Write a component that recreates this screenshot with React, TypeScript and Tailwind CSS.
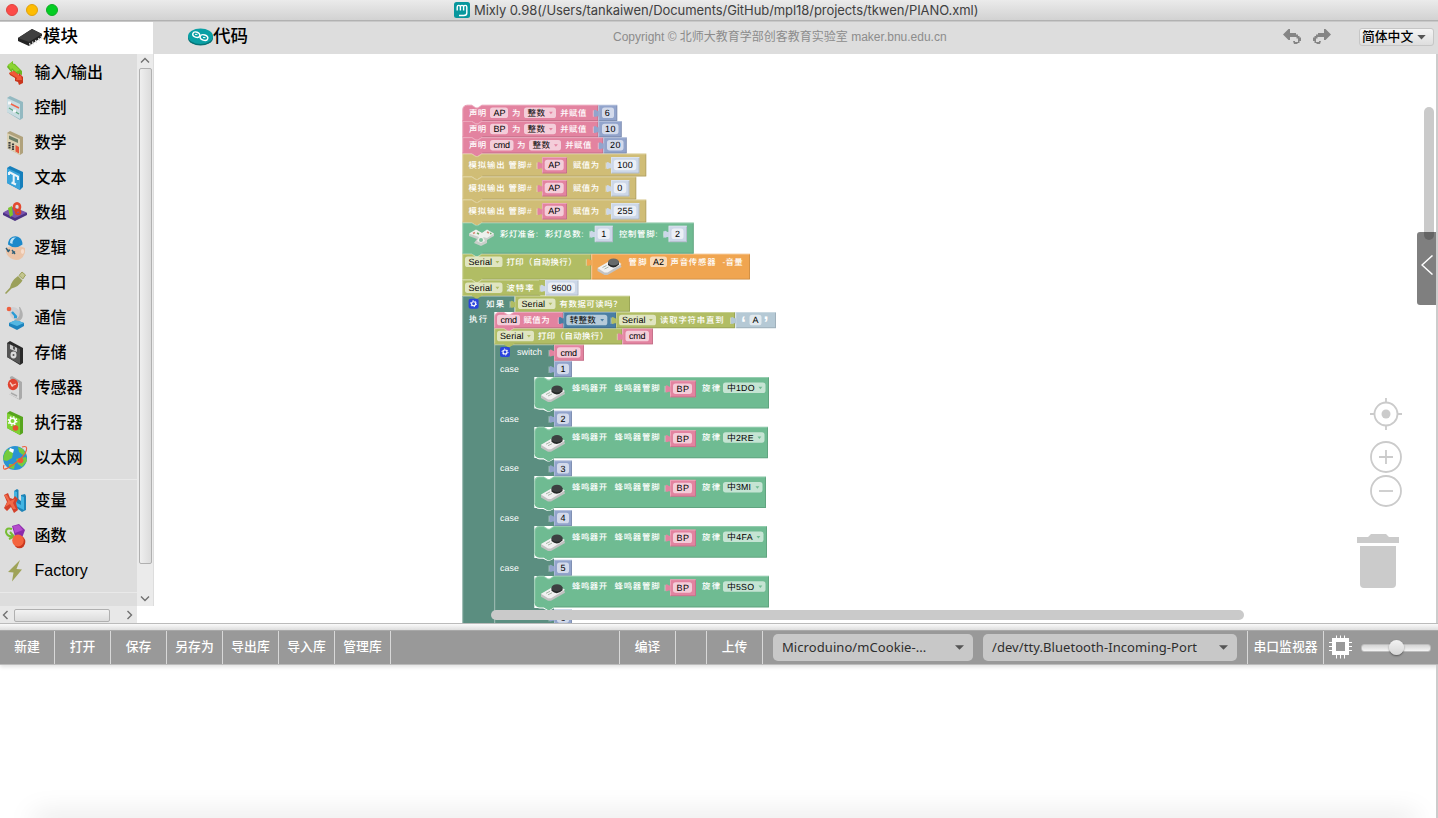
import React from "react";

const CJK = "font-['Liberation_Sans','Noto_Sans_CJK_SC',sans-serif]";

const C = {
  pink: "#e383a0",
  blue: "#92a4cc",
  sand: "#d0bd76",
  green: "#6fbb92",
  olive: "#b1bd64",
  orange: "#f0a550",
  teal: "#5b8e80",
  navy: "#4a7ea3",
  pale: "#b5c9d5",
  value: "#ccd7e8",
};

/* ---------- workspace blocks ---------- */

type BlockProps = { x: number; y: number; w: number; h: number; c: string; round?: boolean; stack?: boolean };

function Block({ x, y, w, h, c, round, stack }: BlockProps) {
  const top = round ? `M${x},${y + 5} a5,5 0 0 1 5,-5` : `M${x},${y}`;
  const d = stack
    ? `${top} H${x + 9.5} l4,2.6 h2 l4,-2.6 H${x + w} V${y + h} H${x + 19.5} l-4,2.6 h-2 l-4,-2.6 H${round && h > 20 ? x + 5 : x} ${round && h > 20 ? "a5,5 0 0 1 -5,-5" : ""} Z`
    : `${top} H${x + w} V${y + h} H${x} Z`;
  return (
    <g>
      <path d={d} fill={c} />
      <path d={`M${x + 0.5},${y + h - (round && h > 20 ? 5 : 1)} V${y + (round ? 5 : 0.5)} ${round ? "a4.5,4.5 0 0 1 4.5,-4.5" : ""} ${stack ? `H${x + 9.5} l4,2.6 h2 l4,-2.6` : ""} H${x + w - 0.5}`} fill="none" stroke="#fff" strokeOpacity=".28" />
      <path d={`M${x + w - 0.5},${y + 1} V${y + h - 0.5} H${x + (stack ? 20 : 1)}`} fill="none" stroke="#000" strokeOpacity=".12" />
    </g>
  );
}

function Tab({ x, y, c }: { x: number; y: number; c: string }) {
  return (
    <g>
      <path d={`M${x + 0.5},${y + 3} v1.5 c0,6 -5.3,-5 -5.3,4.5 c0,7 5.3,-1 5.3,4.3 z`} fill={c} />
      <path d={`M${x - 5},${y + 5.5} v6.5`} stroke="#fff" strokeOpacity=".4" fill="none" />
    </g>
  );
}

function Value(p: BlockProps) {
  return (
    <g>
      <Block {...p} />
      <Tab x={p.x} y={p.y} c={p.c} />
    </g>
  );
}

type TProps = { x: number; y: number; w?: number; s: string; f?: string; size?: number; b?: number };

function T({ x, y, w, s, f = "#fff", size = 8.4, b = 500 }: TProps) {
  return (
    <text x={x} y={y} textLength={w} fill={f} fontSize={size} fontWeight={b}>
      {s}
    </text>
  );
}

type FieldProps = { x: number; y: number; w: number; s: string; tw: number; tx?: number; arrow?: string; o?: number; size?: number };

function Field({ x, y, w, s, tw, tx = 3.5, arrow, o = 0.6, size = 9 }: FieldProps) {
  return (
    <g>
      <rect x={x} y={y} width={w} height={10.5} rx={2.6} fill="#fff" fillOpacity={o} />
      <T x={x + tx} y={y + 8.5} w={tw} s={s} f="#000" size={size} b={400} />
      {arrow && <path d={`M${x + w - 7},${y + 4.3} h3.8 l-1.9,2.5 z`} fill={arrow} />}
    </g>
  );
}

function Declare({ y, name, fw, nw, dx, num, bw, nx, numW }: { y: number; name: string; fw: number; nw: number; dx: number; num: string; bw: number; nx: number; numW: number }) {
  return (
    <g>
      <Block x={462.3} y={y} w={136 + dx} h={16.2} c={C.pink} stack round={y < 106} />
      <T x={469} y={y + 10.8} w={17} s="声明" />
      <Field x={490} y={y + 2.7} w={fw} s={name} tw={nw} />
      <T x={512 + dx} y={y + 10.8} s="为" />
      <Field x={524 + dx} y={y + 2.7} w={32} s="整数" tw={17.5} size={8.6} arrow={C.pink} />
      <T x={560.3 + dx} y={y + 10.8} w={26} s="并赋值" />
      <Value x={598.3 + dx} y={y} w={bw} h={16.2} c={C.blue} />
      <Field x={602 + dx} y={y + 2.7} w={bw - 7} s={num} tw={numW} tx={nx} />
    </g>
  );
}

function Analog({ y, w, s, vw, tw }: { y: number; w: number; s: string; vw: number; tw: number }) {
  return (
    <g>
      <Block x={462.3} y={y} w={w} h={23} c={C.sand} stack />
      <T x={468.6} y={y + 14.3} w={63} s="模拟输出 管脚#" />
      <Value x={542} y={y + 3.5} w={25} h={16.5} c={C.pink} />
      <Field x={544.7} y={y + 6.2} w={19} s="AP" tw={12} />
      <T x={573} y={y + 14.3} w={26} s="赋值为" />
      <Value x={611} y={y + 3.5} w={vw} h={16.5} c={C.value} />
      <Field x={613.8} y={y + 6.2} w={vw - 6} s={s} tw={tw} />
    </g>
  );
}

function Gear({ x, y }: { x: number; y: number }) {
  return (
    <g>
      <rect x={x} y={y} width="10" height="10" rx="2" fill="#2a44dd" />
      <circle cx={x + 5} cy={y + 5} r="2" fill="none" stroke="#fff" strokeWidth="1.1" />
      <circle cx={x + 5} cy={y + 5} r="3" fill="none" stroke="#fff" strokeWidth="1" strokeDasharray="1.3 1.84" />
    </g>
  );
}

function Buzzer({ x, y, knob = "#3d4041" }: { x: number; y: number; knob?: string }) {
  return (
    <g transform={`translate(${x},${y})`}>
      <path d="M0,10.5 L13,3 Q16,2 23,6 L24,9 L10,17 L7,17 L0,13z" fill="#c2c2c2" />
      <path d="M0,10 L13,2.5 Q16,1.5 24,6 L10,14.5 L7,14.5z" fill="#f1f1f1" />
      <path d="M5,9.5 l4,-2 M7,11 l4,-2" stroke="#a9b6a9" fill="none" />
      <path d="M10.5,4 V7 Q16,12 21.5,6.5 V3.5z" fill="#252828" />
      <ellipse cx="16" cy="4" rx="5.5" ry="3.6" fill={knob} />
    </g>
  );
}

function Lamps({ x, y }: { x: number; y: number }) {
  return (
    <g transform={`translate(${x},${y + 1})`}>
      <path d="M0,5 L7,1 L13,4 L18,1 L25,5 L25,7 L18,11 L18,14 L12,17 L5,14 L8,10 L0,7z" fill="#c9cfca" />
      <path d="M0,4.5 L7,.5 L13,4 L18,.5 L25,4.5 L18,9 L14,8 L16,12 L12,14 L8,12 L10,8z" fill="#eef0ed" />
      <path d="M4,4.5 l2,-1 M18,3 l2,1" stroke="#d78b76" strokeWidth="1.5" />
      <path d="M8,4 l2,1 M21,4.5 l1.5,0" stroke="#6faa68" strokeWidth="1.5" />
      <circle cx="12" cy="11" r="2" fill="#7cc29b" />
    </g>
  );
}

const melody = [
  { n: "1", note: "中1DO", right: 769, tw: 27.5 },
  { n: "2", note: "中2RE", right: 768, tw: 26.5 },
  { n: "3", note: "中3MI", right: 766, tw: 24 },
  { n: "4", note: "中4FA", right: 767, tw: 25.5 },
  { n: "5", note: "中5SO", right: 769, tw: 27 },
];

function Melody({ y, n, note, right, tw }: { y: number; n: string; note: string; right: number; tw: number }) {
  return (
    <g>
      <T x={500} y={y + 10.8} w={19} s="case" b={400} size={8.8} />
      <Value x={554} y={y} w={18} h={16} c={C.blue} />
      <Field x={557} y={y + 2.7} w={12} s={n} tw={5} />
      <path d={`M534.8,${y + 43} a5,5 0 0 0 5,5 H543.5 l4,2 h2 l4,-2`} fill="none" stroke="#fff" strokeWidth="1.4" />
      <Block x={534.3} y={y + 16} w={right - 534.3} h={31.6} c={C.green} stack round />
      <Buzzer x={541} y={y + 24} />
      <T x={572} y={y + 29.5} w={35} s="蜂鸣器开" />
      <T x={614.5} y={y + 29.5} w={45} s="蜂鸣器管脚" />
      <Value x={670} y={y + 19.4} w={26} h={17} c={C.pink} />
      <Field x={673} y={y + 22.4} w={19} s="BP" tw={12.5} />
      <T x={702} y={y + 29.5} w={18} s="旋律" />
      <Field x={723} y={y + 21.5} w={right - 3.5 - 723} s={note} tw={tw} tx={4} size={8.8} arrow={C.green} />
    </g>
  );
}

function Blocks() {
  return (
    <svg width="1284" height="570" viewBox="154 54 1284 570" textRendering="geometricPrecision" className={`block ${CJK}`}>
      <path d="M462.3,296 H514.5 V312 H494.3 V624 H462.3z" fill={C.teal} />
      <path d="M494.3,344.5 H554 V377 H534.3 V408.5 H554 V427 H534.3 V458 H554 V476 H534.3 V508 H554 V526 H534.3 V558 H554 V576 H534.3 V608 H554 V624 H494.3z" fill={C.teal} />
      <path d="M462.8,624 V296.5 H514 M494.8,624 V345 H553" fill="none" stroke="#fff" strokeOpacity=".28" />

      {melody.map((m, i) => (
        <Melody key={m.n} y={361 + i * 49.7} {...m} />
      ))}
      <Value x={554} y={609.5} w={18} h={16} c={C.blue} />
      <Field x={557} y={612.2} w={12} s="6" tw={5} />
      <T x={500} y={620.2} w={19} s="case" b={400} size={8.8} />

      <Gear x={500} y={347} />
      <T x={517} y={355} w={25} s="switch" b={400} size={9} />
      <Value x={554} y={344.5} w={30} h={16.3} c={C.pink} />
      <Field x={557} y={347.2} w={23.5} s="cmd" tw={16.5} />

      <Block x={494.3} y={328.2} w={128} h={16.2} c={C.olive} stack />
      <Field x={497} y={330.8} w={37} s="Serial" tw={23.5} tx={3} arrow={C.olive} />
      <T x={538} y={339} w={70} s="打印（自动换行）" />
      <Value x={622.3} y={328.2} w={30.7} h={16.2} c={C.pink} />
      <Field x={625.5} y={330.8} w={23.5} s="cmd" tw={16.5} />

      <Block x={494.3} y={312} w={69} h={16.2} c={C.pink} stack round />
      <Field x={497} y={314.8} w={23} s="cmd" tw={16.5} />
      <T x={523.5} y={323} w={26} s="赋值为" />
      <Value x={563.3} y={312} w={53} h={16.2} c={C.navy} />
      <Field x={566.3} y={314.8} w={41} s="转整数" tw={26} arrow={C.navy} size={8.6} />
      <Value x={616} y={312} w={119} h={16.2} c={C.olive} />
      <Field x={619} y={314.8} w={37} s="Serial" tw={23.5} tx={3} arrow={C.olive} />
      <T x={660} y={323} w={63.5} s="读取字符串直到" />
      <Value x={735.5} y={312} w={40.5} h={16.2} c={C.pale} />
      <T x={741} y={329} s="‘" size={18} b={700} />
      <Field x={749.5} y={314.8} w={12} s="A" tw={6} tx={3} />
      <T x={763.5} y={329} s="’" size={18} b={700} />

      <Gear x={468.6} y={298.7} />
      <T x={486} y={307} w={18} s="如果" />
      <T x={469} y={321.8} w={18} s="执行" />
      <Value x={515} y={295.8} w={115} h={16} c={C.olive} />
      <Field x={518} y={298.5} w={37.5} s="Serial" tw={23.5} tx={3.5} arrow={C.olive} />
      <T x={559.5} y={306.8} w={62} s="有数据可读吗？" />

      <Block x={462.3} y={279.8} w={78} h={16} c={C.olive} stack />
      <path d="M539,280 h6 v15.5 h-6z" fill={C.olive} />
      <Field x={465} y={282.4} w={37.5} s="Serial" tw={23.5} tx={3.5} arrow={C.olive} />
      <T x={506.5} y={290.8} w={27} s="波特率" />
      <Value x={545} y={279.8} w={33.5} h={15.8} c={C.value} />
      <Field x={548} y={282.4} w={27} s="9600" tw={20} />

      <Block x={462.3} y={253.8} w={129} h={25.8} c={C.olive} stack />
      <Field x={465} y={256.6} w={37.5} s="Serial" tw={23.5} tx={3.5} arrow={C.olive} />
      <T x={506.5} y={264.9} w={70} s="打印（自动换行）" />
      <Value x={591.3} y={253.8} w={158.7} h={25.8} c={C.orange} />
      <Buzzer x={597.5} y={258} knob="#666a6b" />
      <T x={628.5} y={264.9} w={18} s="管脚" />
      <Field x={650} y={256.6} w={17} s="A2" tw={11} tx={3} />
      <T x={670.5} y={264.9} w={45} s="声音传感器" />
      <T x={722.5} y={264.9} w={20} s="-音量" />

      <Block x={462.3} y={222.5} w={231.5} h={31.2} c={C.green} stack />
      <Lamps x={469} y={228} />
      <T x={500} y={237} w={38} s="彩灯准备:" />
      <T x={545} y={237} w={38.5} s="彩灯总数:" />
      <Value x={594.7} y={225.7} w={18.3} h={16.5} c={C.value} />
      <Field x={597.7} y={228.6} w={12} s="1" tw={5} />
      <T x={619} y={237} w={38.5} s="控制管脚:" />
      <Value x={668.5} y={225.7} w={18.5} h={16.5} c={C.value} />
      <Field x={671.5} y={228.6} w={12} s="2" tw={5} />

      <Analog y={199.5} w={184} s="255" vw={28.5} tw={15.5} />
      <Analog y={176.5} w={174} s="0" vw={18.5} tw={5} />
      <Analog y={153.5} w={184} s="100" vw={28.5} tw={15.5} />
      <Declare y={137.2} name="cmd" fw={23.5} nw={16.5} dx={5} num="20" bw={23.5} nx={3} numW={10.5} />
      <Declare y={121} name="BP" fw={18} nw={12} dx={0} num="10" bw={23.5} nx={3} numW={10.5} />
      <Declare y={104.8} name="AP" fw={18} nw={12} dx={0} num="6" bw={19} nx={2.8} numW={5} />
    </svg>
  );
}

/* ---------- category icons, 24 x 24 ---------- */

const icons: Record<string, React.ReactNode> = {
  io: (
    <>
      <path d="M3,4 L8,0 L8,2.5 L10,3 L17,10 V14 L14,13 L11,13 L7,9 V12 L2,6z" fill="#6bb824" />
      <path d="M3,4 L8,0 L7,3 L9,3.5 L15,9 L11,11 L7,7 L6,9z" fill="#8cd432" />
      <path d="M4,12 L9,10 L14,14 L14,12 L18,16 V22 L14,24 L13,21 L10,20 L10,17 L5,14z" fill="#c9361d" />
      <path d="M4,12 L9,10 L15,15 L16,14 L17,19 L11,19 L12,17z" fill="#f05a38" />
    </>
  ),
  control: (
    <>
      <path d="M2,2 L5,0 L18,6 V22 L15,24 L2,16z" fill="#93b9c1" />
      <path d="M2,2 L15,8 V23 L2,16z" fill="#c9dde2" />
      <path d="M4,7 l10,5" stroke="#f0654a" strokeWidth="1.4" />
      <path d="M4,12 l10,6" stroke="#60a783" strokeWidth="1.4" />
      <path d="M3,7 h3 M8,15 h3" stroke="#f4f8fa" strokeWidth="3" />
    </>
  ),
  math: (
    <>
      <path d="M2,2 L5,0 L18,6 V22 L15,24 L2,17z" fill="#b0a27c" />
      <path d="M2,2 L15,8 V24 L2,17z" fill="#dcd2b4" />
      <path d="M4,4.5 L13,8.5 V12 L4,8z" fill="#6d7f68" />
      <path d="M4.5,11 v6.5 M8,12.5 v6.5" stroke="#3c3c3c" strokeWidth="2.2" strokeDasharray="1.8 .6" />
      <path d="M10.5,14 l3.5,2 v6.5 l-3.5,-2z" fill="#e3553a" />
    </>
  ),
  text: (
    <>
      <path d="M2,2 L5,0 L18,6 V21 L15,24 L2,17z" fill="#167fbb" />
      <path d="M2,2 L15,8 V24 L2,17z" fill="#38a3da" />
      <path d="M4,6 L13,10.5 V14 M4,6 v3 M8.7,8 V17.5 M6.5,16.5 l4.5,2" fill="none" stroke="#e9f4fa" strokeWidth="2" />
    </>
  ),
  array: (
    <>
      <path d="M-2,12 L8,7 L22,12 V14 L10,20 L-2,14z" fill="#4c3285" />
      <path d="M-2,11.5 L8,6 L22,11.5 L10,17z" fill="#7954ae" />
      <path d="M3,7 L7,5 L8,14 L5,16z" fill="#7cc42e" />
      <ellipse cx="12" cy="6" rx="3" ry="3.6" fill="none" stroke="#e34a30" strokeWidth="2.6" />
      <circle cx="13" cy="11" r="2.2" fill="none" stroke="#d64228" strokeWidth="2.2" />
    </>
  ),
  logic: (
    <>
      <path d="M1,12 Q10,7 20,12 V16 Q18,24 11,24 Q3,23 1,16z" fill="#ebc4a8" />
      <path d="M3,8.5 C3,-2.5 17.5,-2.5 17.5,8.5 Q10,14 3,8.5z" fill="#1c89ca" />
      <path d="M5,7 Q5,1 11,1.5 Q7,4 7.5,8z" fill="#bfe3f5" />
      <path d="M1,12 l3,4 M2,15 l3,-1 M7,14 l3,4 M7,17.5 l3,-2" stroke="#2f5f78" strokeWidth="1.4" />
      <ellipse cx="17.5" cy="15.5" rx="1.6" ry="2.4" fill="#f6ddcc" />
    </>
  ),
  serial: (
    <>
      <path d="M0,22 L5,16.5 Q6,10 13,5 L17.5,9.5 Q14,15.5 6.5,17.5 L1,23z" fill="#9ba05a" />
      <path d="M14,4.5 L17,1 L20.5,4 L17.8,8z" fill="#c3c58e" stroke="#9ba05a" strokeWidth="1" />
    </>
  ),
  comm: (
    <>
      <path d="M4,17 L11,14 L19,17 V20 L12,24 L4,20z" fill="#1d83bd" />
      <path d="M4,17 L11,14 L19,17 L12,20z" fill="#54b7e2" />
      <path d="M4,2 Q14,-2 17,12 Q9,17 5,9z" fill="#cfcfd2" />
      <path d="M15,1 Q21,11 14,15 L9,14 Q17,12 14,1z" fill="#b0b0b0" />
      <circle cx="4" cy="3" r="2.3" fill="#ef603f" />
      <path d="M7,6 l4.5,5 M9,11 h3" stroke="#299bd5" strokeWidth="2.4" />
    </>
  ),
  storage: (
    <>
      <path d="M2,2 L5,0 L18,7 V22 L15,24 L2,16z" fill="#292929" />
      <path d="M2,2 L15,8 V23 L2,16z" fill="#555" />
      <path d="M5,3.5 L12,7 V11 L5,8z" fill="#cbcbcb" />
      <path d="M8,5 l2,1 v3 l-2,-1z" fill="#555" />
      <ellipse cx="8.5" cy="14" rx="3" ry="3.4" fill="#dadada" />
      <circle cx="8.5" cy="14" r="1" fill="#555" />
    </>
  ),
  sensor: (
    <>
      <path d="M5,1 L7,0 L17,6 V22 L15,24 L4,18z" fill="#aaa" />
      <path d="M4,2 L14,7 V23 L4,18z" fill="#dcdcdc" />
      <ellipse cx="8" cy="8.5" rx="5.2" ry="5.8" fill="#e04330" />
      <path d="M5,6.5 l3,4 M6,10 l5,-2" stroke="#f7c9bd" strokeWidth="1.3" />
      <path d="M6,17 l6,3" stroke="#aaa" strokeWidth="1.5" />
    </>
  ),
  actuator: (
    <>
      <path d="M2,2 L5,0 L18,6 V22 L15,24 L2,17z" fill="#57a51e" />
      <path d="M2,2 L15,8 V24 L2,17z" fill="#7ed032" />
      <circle cx="7.5" cy="10" r="2.8" fill="none" stroke="#fff" strokeWidth="1.6" />
      <circle cx="7.5" cy="10" r="4.2" fill="none" stroke="#fff" strokeWidth="1.4" strokeDasharray="1.6 1.7" />
      <circle cx="10.5" cy="17" r="2.8" fill="#e4512f" />
    </>
  ),
  net: (
    <>
      <circle cx="10" cy="12" r="12" fill="#2a93d2" />
      <path d="M-1.5,10 Q0,5 3,3 L8,7 L7,12 L2,15 L-1.8,14z M13,1 L18,3 L21,8 L18,9 L14,6z M11,13 L21,11 L22,15 L17,21 L13,18z M4,18 L10,18 L9,23 L4,22z" fill="#74cc3e" />
      <path d="M5,2 L9,3.5 L8,7 L4,5z" fill="#fff" />
      <path d="M17,1 C25,-2 22,8 13,15 S-4,27 -1,19" stroke="#ed5d3c" fill="none" strokeWidth="1.1" />
      <circle cx="15.5" cy="14.5" r="2.8" fill="#ef5937" />
    </>
  ),
  variable: (
    <>
      <path d="M9,2 L12,0 L13.5,1 V10 L16,12 V6 L20,5 L21,7 V21 L17,23 L9,17z" fill="#1e83b7" />
      <path d="M9,2 L12,3 V14 L16,16 V7 L19,8 V21 L9,16z" fill="#43b4e2" />
      <path d="M-1,6 L3,4 L5,9 L8,10 L10,7 L13,10 L11,14 L13,21 L9,24 L6,18 L2,22 L-1,19 L2,13z" fill="#d3412b" />
      <path d="M-1,6 L2,6 L5,12 L10,10 L8,14 L11,20 L8,20 L5,15 L0,18 L3,12z" fill="#f16a49" />
    </>
  ),
  fn: (
    <>
      <path d="M7,2 L14,0 L20,6 L17,14 L10,12z" fill="#8b2aab" />
      <path d="M8,2 L14,1 L18,6 L10,9z" fill="#b44bcc" />
      <path d="M7,5 Q1,3 1,8 Q2,13 8,12 M5,8 L9,12.5 L4,15" stroke="#76bd32" strokeWidth="2" fill="none" />
      <ellipse cx="14.5" cy="18" rx="5.8" ry="6.3" fill="#c9381f" />
      <ellipse cx="13" cy="16.5" rx="5.8" ry="6" fill="#f4643e" />
    </>
  ),
  factory: <path d="M15,1 L3,13 L8.5,13.5 L7,22.5 L17,10.5 L11.5,10z" fill="#9fa358" />,
};

function Category({ icon, label }: { icon: string; label: string }) {
  return (
    <div className="flex h-[35px] items-center">
      <svg width="24" height="24" viewBox="0 0 24 24" className="ml-[5px] shrink-0 overflow-visible">
        {icons[icon]}
      </svg>
      <span className="ml-[5.5px] whitespace-nowrap text-[16px] leading-none font-medium text-black">{label}</span>
    </div>
  );
}

function Chevron({ d }: { d: string }) {
  return (
    <svg width="10" height="10" viewBox="0 0 10 10" className="shrink-0">
      <path d={d} fill="none" stroke="#707070" strokeWidth="1.4" />
    </svg>
  );
}

function Sidebar() {
  return (
    <div className="flex h-[570px] w-[154px] shrink-0 flex-col">
      <div className="flex h-[552px]">
        <div className="h-[552px] w-[137px] overflow-hidden bg-[#ddd] pt-px">
          <Category icon="io" label="输入/输出" />
          <Category icon="control" label="控制" />
          <Category icon="math" label="数学" />
          <Category icon="text" label="文本" />
          <Category icon="array" label="数组" />
          <Category icon="logic" label="逻辑" />
          <Category icon="serial" label="串口" />
          <Category icon="comm" label="通信" />
          <Category icon="storage" label="存储" />
          <Category icon="sensor" label="传感器" />
          <Category icon="actuator" label="执行器" />
          <Category icon="net" label="以太网" />
          <div className="mt-[4px] mb-[3px] h-px bg-[#e9e9e9]" />
          <Category icon="variable" label="变量" />
          <Category icon="fn" label="函数" />
          <Category icon="factory" label="Factory" />
          <div className="mt-[4px] h-px bg-[#e9e9e9]" />
          <div className="mt-[10px] ml-[35px] text-[16px] leading-[23px]">软件模拟</div>
        </div>
        <div className="flex w-[17px] flex-col items-center border-r border-[#ddd] bg-[#ebebeb] pt-px">
          <Chevron d="M1,7.5 L5,3.5 L9,7.5" />
          <div className="mt-[3px] h-[496px] w-[13px] rounded-[2px] border border-[#b0b0b0] bg-gradient-to-r from-[#efefef] to-[#dcdcdc]" />
          <div className="mt-[30px]">
            <Chevron d="M1,2.5 L5,6.5 L9,2.5" />
          </div>
        </div>
      </div>
      <div className="flex h-[18px] w-[137px] items-center bg-[#e8e8e8] px-px">
        <Chevron d="M6.5,1 L2.5,5 L6.5,9" />
        <div className="mr-[15px] ml-[3px] h-[13px] w-[96px] rounded-[2px] border border-[#b0b0b0] bg-gradient-to-b from-[#f2f2f2] to-[#dcdcdc]" />
        <Chevron d="M2.5,1 L6.5,5 L2.5,9" />
      </div>
    </div>
  );
}

function Header() {
  return (
    <>
      <div className="flex h-[21px] items-center border-b border-[#b1b1b1] bg-gradient-to-b from-[#ebebeb] to-[#d2d2d2]">
        <div className="flex w-[454px] gap-[8px] pl-[6px]">
          <div className="h-3 w-3 rounded-full border border-[#e0443e] bg-[#fc4b48]" />
          <div className="h-3 w-3 rounded-full border border-[#e0a10c] bg-[#fdbc02]" />
          <div className="h-3 w-3 rounded-full border border-[#10ac26] bg-[#04cd23]" />
        </div>
        <svg width="16" height="16" viewBox="0 0 16 16">
          <rect width="16" height="16" rx="2.5" fill="#08979d" />
          <path d="M3.2,8.5 V5 a1.6,1.6 0 0 1 3.2,0 V8.5 M6.4,5 a1.6,1.6 0 0 1 3.2,0 V8.5 M9.6,5 a1.6,1.6 0 0 1 3.2,0 V11 q0,2.5 -3,2.5 H5" fill="none" stroke="#fff" strokeWidth="1.4" />
        </svg>
        <span className="ml-[4px] whitespace-nowrap font-['Inter',sans-serif] text-[13px] leading-[18px] tracking-[-0.065px] text-[#404040]">
          Mixly 0.98(/Users/tankaiwen/Documents/GitHub/mpl18/projects/tkwen/PIANO.xml)
        </span>
      </div>
      <div className="flex h-[33px] border-t border-[#c8c8c8] bg-[#ddd]">
        <div className="flex w-[153px] bg-white pl-[17px]">
          <svg width="26" height="20" viewBox="0 0 26 20" className="mt-[6px]">
            <path d="M1,10 L15,1 L25,6 L25,9 L12,18 L1,13z" fill="#242424" />
            <path d="M1,10 L15,1 L25,6 L12,14z" fill="#404040" />
            <path d="M12.5,15 l1,3 M15.5,13.5 l1,3 M18.5,12 l1,3 M21.5,10 l1,3 M24,8 l1,3" stroke="#ddd" strokeWidth="1.2" />
          </svg>
          <span className="mt-[2px] text-[17.5px] leading-[24px] font-medium">模块</span>
        </div>
        <div className="flex w-[460px] pl-[34px]">
          <svg width="26" height="20" viewBox="0 0 26 20" className="mt-[5px]">
            <ellipse cx="13.5" cy="11" rx="12.5" ry="7.5" fill="#067276" />
            <ellipse cx="13.5" cy="9.3" rx="12.5" ry="7.7" fill="#0ba0a5" />
            <ellipse cx="9.3" cy="7.7" rx="3.6" ry="2.6" transform="rotate(18 9.3 7.7)" fill="none" stroke="#fff" strokeWidth="1.4" />
            <ellipse cx="17" cy="10.6" rx="3.9" ry="2.7" transform="rotate(18 17 10.6)" fill="none" stroke="#fff" strokeWidth="1.4" />
            <path d="M8,7.4 h2.4 M16,10.6 h2.4" stroke="#fff" strokeWidth="1" />
          </svg>
          <span className="mt-[2px] text-[17.5px] leading-[24px] font-medium">代码</span>
        </div>
        <div className="w-[670px] pt-[6px] text-[12px] leading-[18px] whitespace-nowrap text-[#8c8c8c]">
          Copyright © 北师大教育学部创客教育实验室 maker.bnu.edu.cn
        </div>
        <svg width="50" height="20" viewBox="0 0 50 20" className="mt-[5px]" fill="#858585">
          <path d="M0,7.5 L5.5,2 H7 V6 H13 V7.5 H15 V9 H16.5 V10.5 H18 V14 H15 V11.5 H13.5 V10 H7 V13 H5.5z M10,14 h2 v1 h3 v-1 h1.5 v2 h-2 v1 h-3.5z" />
          <path d="M48,7.5 L42.5,2 H41 V6 H35 V7.5 H33 V9 H31.5 V10.5 H30 V14 H33 V11.5 H34.5 V10 H41 V13 H42.5z M38,14 h-2 v1 h-3 v-1 h-1.5 v2 h2 v1 h3.5z" />
        </svg>
        <div className="mt-[6px] ml-[26px] flex h-[18px] w-[75px] items-center rounded-[3px] border border-[#c6c6c6] bg-gradient-to-b from-[#f5f5f5] to-[#dedede] pl-[2px]">
          <span className="text-[12.8px] leading-none font-medium whitespace-nowrap">简体中文</span>
          <svg width="9" height="5" viewBox="0 0 10 6" className="ml-[4px]">
            <path d="M0,0 h10 l-5,5.5z" fill="#555" />
          </svg>
        </div>
      </div>
    </>
  );
}

function Tool({ w, label }: { w: string; label?: string }) {
  return (
    <div className={`flex h-full shrink-0 items-center justify-center border-r border-[#d8d8d8] pb-[2px] text-[12.8px] font-medium whitespace-nowrap text-white ${w}`}>
      {label}
    </div>
  );
}

function Select({ w, label }: { w: string; label: string }) {
  return (
    <div className={`flex h-[27px] shrink-0 items-center justify-between rounded-[5px] bg-[#c8c8c8] pr-[9px] pl-[9px] font-['Noto_Sans',sans-serif] text-[13px] tracking-[0.07px] whitespace-nowrap text-[#2e2e2e] ${w}`}>
      <span>{label}</span>
      <svg width="9" height="5" viewBox="0 0 10 5">
        <path d="M0,0 h10 l-5,5z" fill="#555" />
      </svg>
    </div>
  );
}

function Toolbar() {
  return (
    <div className="flex h-[34px] items-center border-b border-[#bbb] bg-[#999] shadow-[0_2px_4px_rgba(0,0,0,0.12)]">
      <Tool w="w-[55px]" label="新建" />
      <Tool w="w-[56px]" label="打开" />
      <Tool w="w-[56px]" label="保存" />
      <Tool w="w-[56px]" label="另存为" />
      <Tool w="w-[56px]" label="导出库" />
      <Tool w="w-[56px]" label="导入库" />
      <Tool w="w-[56px]" label="管理库" />
      <Tool w="w-[229px]" />
      <Tool w="w-[56px]" label="编译" />
      <Tool w="w-[31px]" />
      <Tool w="w-[56px]" label="上传" />
      <div className="flex h-full w-[485px] shrink-0 items-center gap-[10px] border-r border-[#d8d8d8] pl-[10px]">
        <Select w="w-[200px]" label="Microduino/mCookie-..." />
        <Select w="w-[254px]" label="/dev/tty.Bluetooth-Incoming-Port" />
      </div>
      <Tool w="w-[76px]" label="串口监视器" />
      <svg width="24" height="24" viewBox="0 0 24 24" className="mb-px ml-[5px] shrink-0">
        <path d="M7.5,0.5 V23.5 M11.5,0.5 V23.5 M15.5,0.5 V23.5 M0,7.5 H23 M0,11.5 H23 M0,15.5 H23" stroke="#fff" />
        <rect x="3" y="3" width="17" height="17" fill="#fff" />
        <rect x="7" y="7" width="9" height="9" fill="#999" />
      </svg>
      <div className="ml-[8px] flex h-[8px] w-[70px] items-center rounded-[3px] border border-[#bcbcbc] bg-gradient-to-b from-[#d4d4d4] to-[#f4f4f4]">
        <div className="ml-[27px] h-[15px] w-[15px] shrink-0 rounded-full bg-gradient-to-b from-[#f2f2f2] to-[#d6d6d6] shadow-[0_1px_2px_rgba(0,0,0,0.45)]" />
      </div>
    </div>
  );
}

export default function App() {
  return (
    <div className={`flex h-[818px] w-[1438px] flex-col overflow-hidden bg-white text-black ${CJK}`}>
      <Header />
      <div className="flex h-[569px] overflow-hidden">
        <Sidebar />
        <div className="relative h-[569px] w-[1284px] overflow-hidden border-r-2 border-[#ccc] bg-white">
          <Blocks />
          <div className="absolute top-[556px] left-[337px] h-[10px] w-[753px] rounded-full bg-[#cacaca]" />
          <div className="absolute top-[53px] left-[1270px] h-[133px] w-[10px] rounded-full bg-[#cacaca]" />
          <div className="absolute top-[178px] left-[1263px] flex h-[73px] w-[20px] items-start rounded-l-[3px] bg-black/50 pt-[23px] pl-[4px]">
            <svg width="12" height="20" viewBox="0 0 12 20">
              <path d="M11.5,0.5 L1,10 L11.5,19.5" fill="none" stroke="#fff" strokeWidth="1.5" />
            </svg>
          </div>
          <svg width="48" height="192" viewBox="0 0 48 192" className="absolute top-[343px] left-[1202px]" fill="none" stroke="#cbcbcb" strokeWidth="1.8">
            <circle cx="30" cy="17" r="11.5" />
            <circle cx="30" cy="17" r="4.5" fill="#cbcbcb" stroke="none" />
            <path d="M30,1 v4 M30,29 v4 M14,17 h4 M42,17 h4" />
            <circle cx="30" cy="60" r="15" />
            <path d="M23,60 h14 M30,53 v14" />
            <circle cx="30" cy="94" r="15" />
            <path d="M23,94 h14" />
            <path d="M1,140 h11 l3,-3 h15 l3,3 h10 v6 h-42z M4,149 h36 v38 q0,4 -4,4 h-28 q-4,0 -4,-4z" fill="#cbcbcb" stroke="none" />
          </svg>
        </div>
      </div>
      <div className="h-[8px] shrink-0 border-t border-b border-t-[#bbb] border-b-[#aaa] bg-gradient-to-b from-[#fafafa] to-[#dedede]" />
      <Toolbar />
      <div className="flex grow flex-col justify-end overflow-hidden border-r-2 border-[#ccc]">
        <div className="mr-[20px] mb-[-8px] ml-[34px] h-[8px] shadow-[0_0_28px_rgba(0,0,0,0.22)]" />
      </div>
    </div>
  );
}
